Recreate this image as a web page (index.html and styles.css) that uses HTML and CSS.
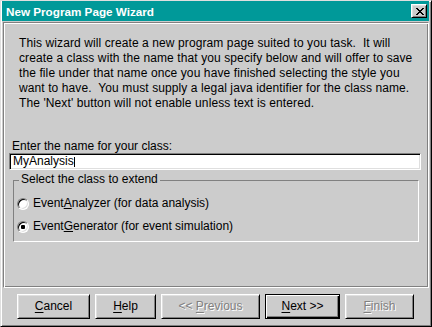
FILE: index.html
```html
<!DOCTYPE html>
<html>
<head>
<meta charset="utf-8">
<title>New Program Page Wizard</title>
<link rel="stylesheet" href="styles.css">
</head>
<body>
<div class="window">
  <div class="titlebar">
    <span class="title">New Program Page Wizard</span>
    <span class="close" aria-label="Close">
      <svg width="8" height="7" viewBox="0 0 8 7" shape-rendering="crispEdges"><path d="M0 0h2v1h-2zM6 0h2v1h-2zM1 1h2v1h-2zM5 1h2v1h-2zM2 2h4v1h-4zM3 3h2v1h-2zM2 4h4v1h-4zM1 5h2v1h-2zM5 5h2v1h-2zM0 6h2v1h-2zM6 6h2v1h-2z" fill="#000"/></svg>
    </span>
  </div>
  <div class="panel">
    <p class="intro">This wizard will create a new program page suited to you task.  It will<br>create a class with the name that you specify below and will offer to save<br>the file under that name once you have finished selecting the style you<br>want to have.  You must supply a legal java identifier for the class name.<br>The 'Next' button will not enable unless text is entered.</p>
    <div class="field-label">Enter the name for your class:</div>
    <div class="textfield"><span>MyAnalysis</span><span class="caret"></span></div>
    <fieldset class="group">
      <legend>Select the class to extend</legend>
      <div class="radio-row"><span class="radio"></span><span>Event<u>A</u>nalyzer (for data analysis)</span></div>
      <div class="radio-row"><span class="radio checked"></span><span>Event<u>G</u>enerator (for event simulation)</span></div>
    </fieldset>
  </div>
  <div class="buttons">
    <button class="btn w-cancel"><u>C</u>ancel</button>
    <button class="btn w-help"><u>H</u>elp</button>
    <button class="btn w-prev disabled">&lt;&lt; <u>P</u>revious</button>
    <button class="btn w-next default"><u>N</u>ext &gt;&gt;</button>
    <button class="btn w-finish disabled"><u>F</u>inish</button>
  </div>
</div>
</body>
</html>
```

FILE: styles.css
```css
html, body {
  margin: 0;
  padding: 0;
  background: #cccccc;
}

body {
  font-family: "Liberation Sans", Arial, sans-serif;
  font-size: 12px;
  color: #000;
}

.window {
  width: 432px;
  height: 327px;
  box-sizing: border-box;
  border: 1px solid;
  border-color: #dfdfdf #000 #000 #dfdfdf;
  padding: 0 2px 1px 1px;
  background: #cccccc;
  box-shadow: inset 1px 1px #fff, inset -1px -1px #808080;
  display: flex;
  flex-direction: column;
}

.titlebar {
  height: 20px;
  flex: none;
  background: #009999;
  display: flex;
  align-items: center;
  justify-content: space-between;
  padding: 0 2px 0 4px;
}

.title {
  color: #fff;
  font-weight: bold;
  font-size: 11.7px;
  line-height: 13px;
}

.close {
  width: 16px;
  height: 14px;
  box-sizing: border-box;
  background: #cccccc;
  border: 1px solid;
  border-color: #fff #000 #000 #fff;
  box-shadow: inset 1px 1px #dfdfdf, inset -1px -1px #808080;
  display: flex;
  align-items: center;
  justify-content: center;
  padding-top: 1px;
  padding-left: 1px;
}

.close svg {
  display: block;
}

.panel {
  margin-top: 1px;
  margin-left: 1px;
  height: 266px;
  flex: none;
  box-sizing: border-box;
  border: 1px solid;
  border-color: #808080 #fff #fff #808080;
  box-shadow: inset 1px 1px #fff, inset -1px -1px #808080;
  display: flex;
  flex-direction: column;
  align-items: flex-start;
}

.intro {
  margin: 13px 0 0 15px;
  line-height: 15px;
  white-space: pre;
  letter-spacing: 0.1px;
}

.field-label {
  margin: 28px 0 0 8px;
  line-height: 14px;
}

.textfield {
  margin-left: 5px;
  width: 412px;
  height: 17px;
  box-sizing: border-box;
  background: #fff;
  border: 1px solid;
  border-color: #808080 #fff #fff #808080;
  box-shadow: inset 1px 1px #000, inset -1px -1px #dfdfdf;
  padding: 0 3px;
  line-height: 15px;
  display: flex;
  align-items: center;
}

.caret {
  width: 1px;
  height: 10px;
  background: #000;
}

.group {
  margin: 2px 0 0 9px;
  width: 406px;
  box-sizing: border-box;
  border: 1px solid;
  border-color: #808080 #fff #fff #808080;
  padding: 4px 0 3px 3px;
  min-width: 0;
}

.group legend {
  margin-left: 2px;
  padding: 0 2px 2px 2px;
  line-height: 14px;
}

.radio-row {
  height: 23px;
  display: flex;
  align-items: center;
  gap: 4px;
  line-height: 15px;
}

.radio {
  width: 12px;
  height: 12px;
  box-sizing: border-box;
  border-radius: 50%;
  border: 1px solid;
  border-color: #808080 #fff #fff #808080;
  background: #fff;
  box-shadow: inset 1px 1px #000, inset -1px -1px #dfdfdf;
  display: flex;
  align-items: center;
  justify-content: center;
  flex: none;
}

.radio.checked::after {
  content: "";
  width: 4px;
  height: 4px;
  border-radius: 1px;
  background: #000;
}

.buttons {
  flex: 1;
  display: flex;
  align-items: flex-start;
  gap: 5px;
  padding: 6px 0 0 15px;
}

.btn {
  height: 25px;
  box-sizing: border-box;
  margin: 0;
  padding: 0;
  font-family: "Liberation Sans", Arial, sans-serif;
  font-size: 12px;
  color: #000;
  background: #cccccc;
  border: 1px solid;
  border-color: #fff #000 #000 #fff;
  box-shadow: inset 1px 1px #dfdfdf, inset -1px -1px #808080;
  border-radius: 0;
  line-height: 15px;
  text-align: center;
}

.btn u {
  text-underline-offset: 2px;
}

.btn.default {
  border-color: #000;
  box-shadow: inset 1px 1px #fff, inset -1px -1px #000, inset -2px -2px #808080;
}

.btn.disabled {
  color: #808080;
  text-shadow: 1px 1px 0 #fff;
}

.w-cancel { width: 73px; }
.w-help { width: 61px; }
.w-prev { width: 99px; }
.w-next { width: 75px; }
.w-finish { width: 69px; }
```
